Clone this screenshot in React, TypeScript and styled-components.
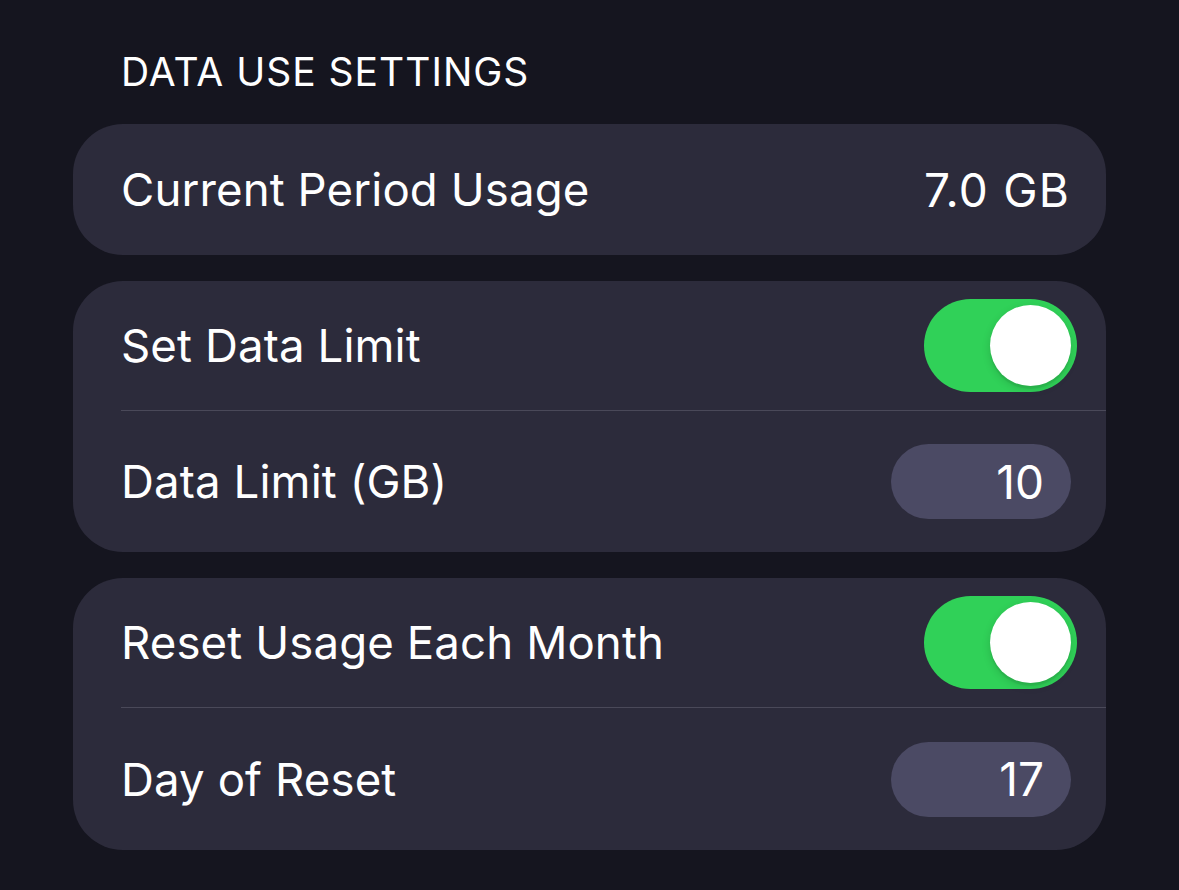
import React from "react";
import styled, { createGlobalStyle } from "styled-components";

const Global = createGlobalStyle`
  html, body { margin: 0; padding: 0; background: #15151f; }
  body { font-family: Inter, "Open Sans", "Liberation Sans", sans-serif; color: #fff; }
`;

const Page = styled.div`
  width: 1179px;
  height: 890px;
  box-sizing: border-box;
  padding: 46px 73px 0 73px;
  display: flex;
  flex-direction: column;
  gap: 26px;
  background: #15151f;
`;

const Header = styled.div`
  font-size: 39px;
  font-weight: 400;
  letter-spacing: 1px;
  padding-left: 48px;
  height: 52px;
  line-height: 52px;
  color: #fff;
`;

const Card = styled.div`
  background: #2c2b3b;
  border-radius: 50px;
  overflow: hidden;
  display: flex;
  flex-direction: column;
`;

const Row = styled.div<{ $h: number }>`
  height: ${(p) => p.$h}px;
  display: flex;
  align-items: center;
  justify-content: space-between;
  padding: 0 29px 0 48px;
`;

const Divider = styled.div`
  height: 1px;
  margin-left: 48px;
  background: #4a4959;
`;

const Label = styled.span`
  font-size: 45.6px;
  letter-spacing: 0.1px;
  color: #fff;
`;

const Value = styled.span`
  font-size: 46px;
  letter-spacing: 1.2px;
  color: #fff;
  margin-right: 7px;
`;

const Track = styled.div<{ $on: boolean }>`
  width: 153px;
  height: 93px;
  border-radius: 47px;
  background: ${(p) => (p.$on ? "#30d158" : "#3a3a4c")};
  display: flex;
  align-items: center;
  justify-content: ${(p) => (p.$on ? "flex-end" : "flex-start")};
  padding: 0 6px;
  box-sizing: border-box;
`;

const Knob = styled.div`
  width: 81px;
  height: 81px;
  border-radius: 50%;
  background: #fff;
  box-shadow: 0 3px 8px rgba(0, 0, 0, 0.15), 0 3px 1px rgba(0, 0, 0, 0.06);
`;

const Pill = styled.div`
  width: 180px;
  height: 75px;
  border-radius: 38px;
  background: #4b4a64;
  box-sizing: border-box;
  padding-right: 27px;
  display: flex;
  align-items: center;
  justify-content: flex-end;
  font-size: 46px;
  color: #fff;
  margin-right: 6px;
`;

const Toggle = ({ on }: { on: boolean }) => (
  <Track $on={on}>
    <Knob />
  </Track>
);

export default function App() {
  return (
    <>
      <Global />
      <Page>
        <Header>DATA USE SETTINGS</Header>
        <Card>
          <Row $h={131}>
            <Label>Current Period Usage</Label>
            <Value>7.0 GB</Value>
          </Row>
        </Card>
        <Card>
          <Row $h={129}>
            <Label>Set Data Limit</Label>
            <Toggle on />
          </Row>
          <Divider />
          <Row $h={141}>
            <Label>Data Limit (GB)</Label>
            <Pill>10</Pill>
          </Row>
        </Card>
        <Card>
          <Row $h={129}>
            <Label>Reset Usage Each Month</Label>
            <Toggle on />
          </Row>
          <Divider />
          <Row $h={142}>
            <Label>Day of Reset</Label>
            <Pill>17</Pill>
          </Row>
        </Card>
      </Page>
    </>
  );
}
